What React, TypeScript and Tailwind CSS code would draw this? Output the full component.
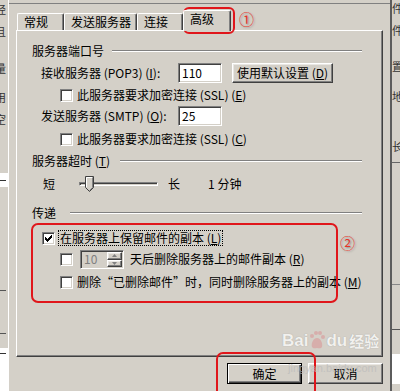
import React from 'react';

const sunken =
  'border border-t-[#808080] border-l-[#808080] border-r-white border-b-white shadow-[inset_1px_1px_#404040,inset_-1px_-1px_#d4d0c8]';
const raised =
  'border border-t-white border-l-white border-r-[#404040] border-b-[#404040] shadow-[inset_-1px_-1px_#808080,inset_1px_1px_#e9e7e3]';

const Checkbox = ({ checked = false }: { checked?: boolean }) => (
  <span className={`relative h-[13px] w-[13px] shrink-0 bg-white ${sunken}`}>
    {checked && (
      <svg width="7" height="7" viewBox="0 0 7 7" className="absolute left-[2px] top-[2px]">
        <path d="M0 2h1v1h1v1h1V3h1V2h1V1h1V0h1v3H6v1H5v1H4v1H3v1H2V6H1V5H0z" fill="#000" />
      </svg>
    )}
  </span>
);

const Etched = ({ className = '' }: { className?: string }) => (
  <div className={`h-[2px] flex-1 border-t border-b border-t-[#808080] border-b-white ${className}`} />
);

const Tab = ({ label, width, active = false }: { label: string; width: string; active?: boolean }) => (
  <div
    className={`${width} ${
      active ? 'relative z-10 -mb-px h-[21px] bg-[#d4d0c8]' : 'h-[17px]'
    } flex shrink-0 items-start rounded-t-[2px] border-t border-l border-r border-t-white border-l-white border-r-[#404040] pl-[6px] shadow-[inset_-1px_0_#808080]`}
  >
    {label}
  </div>
);

const LeftStrip = () => (
  <div className="flex w-[8px] shrink-0 flex-col overflow-hidden text-[11px] leading-[12px] text-[#333]">
    <span className="-ml-[5px] mt-[3px]">经</span>
    <span className="-ml-[5px] mt-[10px]">且</span>
    <span className="-ml-[5px] mt-[25px]">量</span>
    <span className="-ml-[5px] mt-[17px]">用</span>
    <span className="-ml-[5px] mt-[10px]">空</span>
    <div className="mt-[48px] flex h-[15px] items-center bg-white">
      <div className="h-px w-[6px] bg-[#333]" />
    </div>
    <div className="mt-[103px] h-px w-[6px] bg-[#555]" />
    <div className="mt-[42px] h-px w-[6px] bg-[#555]" />
    <div className="mt-[14px] flex h-[45px] flex-col bg-white">
      <div className="mt-[5px] h-px w-[6px] bg-[#333]" />
    </div>
  </div>
);

const RightStrip = () => (
  <div className="flex w-[8px] shrink-0 flex-col overflow-hidden text-[11px] leading-[12px] text-[#333]">
    <span className="mt-[2px]">件</span>
    <span className="mt-[10px]">件</span>
    <span className="mt-[24px]">置</span>
    <span className="mt-[18px]">地</span>
    <span className="mt-[38px]">长</span>
    <div className="mt-[10px] h-px w-full bg-[#666]" />
    <div className="mt-[121px] h-px w-full bg-[#888]" />
    <div className="mt-[44px] h-px w-full bg-[#555]" />
    <div className="mt-[24px] h-[30px] bg-white" />
  </div>
);

export default function App() {
  return (
    <div
      lang="zh-CN"
      className="relative flex h-[391px] w-[400px] overflow-hidden bg-[#d4d0c8] font-['Noto_Sans_CJK_SC',sans-serif] text-[12px] leading-[16px] text-black"
    >
      <LeftStrip />
      <div className="w-px shrink-0 bg-white" />

      <div className="flex w-[381px] shrink-0 flex-col">
        <div className="mt-[3px] h-px bg-[#808080]" />
        <div className="flex flex-col px-[7px]">
          {/* tabs */}
          <div className="flex h-[26px] items-end pl-[1px]">
            <Tab label="常规" width="w-[47px]" />
            <Tab label="发送服务器" width="w-[73px]" />
            <Tab label="连接" width="w-[46px]" />
            <Tab label="高级" width="w-[48px]" active />
          </div>

          {/* panel */}
          <div className="flex h-[327px] flex-col border border-t-white border-l-white border-r-[#404040] border-b-[#404040] pl-[15px] pr-[20px] shadow-[inset_-1px_-1px_#808080]">
            <div className="mt-[12px] flex h-[16px] items-center">
              <span>服务器端口号</span>
              <Etched className="ml-[8px]" />
            </div>

            <div className="mt-[4px] flex h-[20px] items-center pl-[9px]">
              <span className="w-[137px] shrink-0">
                接收服务器 (POP3) (<u>I</u>):
              </span>
              <div className={`flex h-[20px] w-[44px] items-center bg-white pl-[3px] ${sunken}`}>110</div>
              <div className={`ml-[10px] flex h-[20px] w-[101px] items-center justify-center ${raised}`}>
                使用默认设置 (<u>D</u>)
              </div>
            </div>

            <div className="mt-[4px] flex h-[16px] items-center pl-[28px]">
              <Checkbox />
              <span className="ml-[4px]">
                此服务器要求加密连接 (SSL) (<u>E</u>)
              </span>
            </div>

            <div className="mt-[3px] flex h-[20px] items-center pl-[9px]">
              <span className="w-[137px] shrink-0">
                发送服务器 (SMTP) (<u>O</u>):
              </span>
              <div className={`flex h-[20px] w-[44px] items-center bg-white pl-[3px] ${sunken}`}>25</div>
            </div>

            <div className="mt-[5px] flex h-[16px] items-center pl-[28px]">
              <Checkbox />
              <span className="ml-[4px]">
                此服务器要求加密连接 (SSL) (<u>C</u>)
              </span>
            </div>

            <div className="mt-[6px] flex h-[16px] items-center">
              <span>
                服务器超时 (<u>T</u>)
              </span>
              <Etched className="ml-[10px]" />
            </div>

            <div className="mt-[5px] flex h-[20px] items-center pl-[11px]">
              <span>短</span>
              <div className="relative ml-[24px] flex h-[20px] w-[79px] items-center">
                <div className="h-[4px] w-full border border-t-[#808080] border-l-[#808080] border-r-white border-b-white bg-[#d4d0c8] shadow-[inset_1px_1px_#404040]" />
                <svg width="9" height="16" viewBox="0 0 9 16" className="absolute left-[6px] top-[2px]">
                  <path d="M0.5 0.5h8v11l-4 4l-4-4z" fill="#d4d0c8" stroke="#404040" />
                  <path d="M1.5 11V1.5h6" fill="none" stroke="#fff" />
                  <path d="M7.5 1.5v10l-3 3" fill="none" stroke="#808080" />
                </svg>
              </div>
              <span className="ml-[10px]">长</span>
              <span className="ml-[28px]">1 分钟</span>
            </div>

            <div className="mt-[11px] flex h-[16px] items-center">
              <span>传递</span>
              <Etched className="ml-[14px]" />
            </div>

            <div className="mt-[9px] flex h-[16px] items-center pl-[10px]">
              <Checkbox checked />
              <span className="ml-[3px] flex h-[16px] items-center border border-dotted border-black px-px">
                在服务器上保留邮件的副本 (<u>L</u>)
              </span>
            </div>

            <div className="mt-[3px] flex h-[20px] items-center pl-[28px]">
              <Checkbox />
              <div className={`ml-[7px] flex h-[19px] w-[44px] items-center justify-between bg-[#d4d0c8] ${sunken}`}>
                <span className="pl-[3px] text-[#808080]">10</span>
                <div className="mr-px flex h-[15px] w-[15px] flex-col">
                  <div className={`flex h-[8px] items-center justify-center ${raised}`}>
                    <svg width="5" height="3" viewBox="0 0 5 3">
                      <path d="M2.5 0L5 3H0z" fill="#808080" />
                    </svg>
                  </div>
                  <div className={`flex h-[7px] items-center justify-center ${raised}`}>
                    <svg width="5" height="3" viewBox="0 0 5 3">
                      <path d="M0 0h5L2.5 3z" fill="#808080" />
                    </svg>
                  </div>
                </div>
              </div>
              <span className="ml-[6px]">
                天后删除服务器上的邮件副本 (<u>R</u>)
              </span>
            </div>

            <div className="mt-[5px] flex h-[16px] items-center pl-[28px]">
              <Checkbox />
              <span className="ml-[4px] whitespace-nowrap">
                删除“已删除邮件”时，同时删除服务器上的副本 (<u>M</u>)
              </span>
            </div>
          </div>

          {/* buttons */}
          <div className="mt-[6px] flex justify-end gap-[6px]">
            <div className="flex h-[21px] w-[75px] items-center justify-center border border-black shadow-[inset_1px_1px_#fff,inset_-1px_-1px_#404040,inset_-2px_-2px_#808080]">
              确定
            </div>
            <div className={`flex h-[21px] w-[75px] items-center justify-center ${raised}`}>取消</div>
          </div>
        </div>
      </div>

      <div className="w-[2px] shrink-0 bg-[#5c5c5c]" />
      <RightStrip />

      {/* annotations */}
      <div className="absolute left-[183px] top-[7px] h-[27px] w-[52px] rounded-[6px] border-2 border-[#e0161b]" />
      <span className="absolute left-[239px] top-[11px] text-[15px] leading-[16px] text-[#e8342a] [text-shadow:1px_1px_2px_rgba(0,0,0,0.35)]">
        ①
      </span>
      <div className="absolute left-[31px] top-[223px] h-[80px] w-[307px] rounded-[7px] border-2 border-[#e0161b]" />
      <span className="absolute left-[340px] top-[235px] text-[15px] leading-[16px] text-[#e8342a] [text-shadow:1px_1px_2px_rgba(0,0,0,0.35)]">
        ②
      </span>
      <div className="absolute left-[216px] top-[352px] h-[45px] w-[100px] rounded-[7px] border-2 border-[#e0161b]" />

      {/* watermark */}
      <div className="pointer-events-none absolute left-[282px] top-[330px] flex flex-col items-start text-white opacity-70">
        <div className="flex items-end font-['Liberation_Sans',sans-serif] text-[17px] font-bold leading-[18px] [text-shadow:0_0_1px_#888]">
          <span>Bai</span>
          <svg width="16" height="20" viewBox="0 0 16 20" className="mx-px">
            <circle cx="3" cy="6" r="2" fill="#d9a0a0" />
            <circle cx="7" cy="3" r="2" fill="#d9a0a0" />
            <circle cx="11" cy="3" r="2" fill="#d9a0a0" />
            <circle cx="14" cy="7" r="2" fill="#d9a0a0" />
            <path d="M8 8c4 0 6 6 5 9c-1 2-4 1-5 1s-4 1-5-1c-1-3 1-9 5-9z" fill="#d9a0a0" />
          </svg>
          <span>du</span>
          <span className="ml-[2px] font-['Noto_Sans_CJK_SC',sans-serif] text-[15px]">经验</span>
        </div>
        <span className="mt-[12px] pl-[6px] font-['Liberation_Sans',sans-serif] text-[11px] leading-[12px] text-[#bbb]">
          jingyan.baidu.com
        </span>
      </div>
    </div>
  );
}
